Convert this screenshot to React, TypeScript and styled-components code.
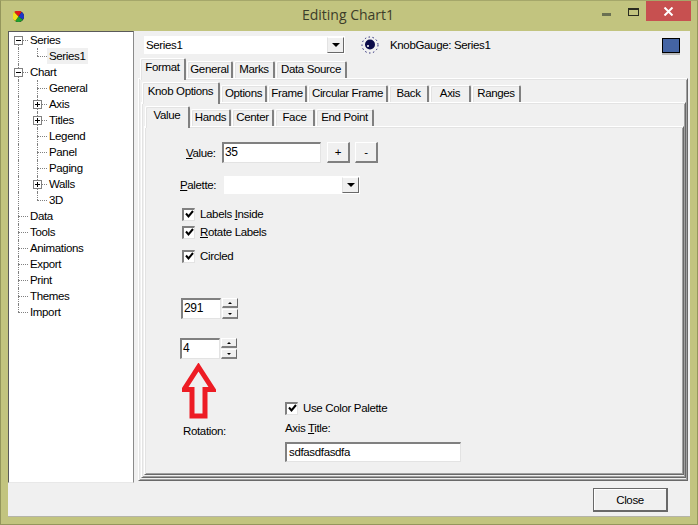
import React from "react";
import styled, { createGlobalStyle } from "styled-components";

const GlobalStyle = createGlobalStyle`
html, body {
  margin: 0;
  padding: 0;
  background: #c2c47f;
}
* {
  box-sizing: border-box;
}
`;

type GuideKind = "none" | "full" | "top" | "bottom";

type TreeItem = {
  label: string;
  first: GuideKind;
  second?: GuideKind;
  box?: "plus" | "minus";
  selected?: boolean;
};

const treeItems: TreeItem[] = [
  { label: "Series", first: "bottom", box: "minus" },
  { label: "Series1", first: "full", second: "top", selected: true },
  { label: "Chart", first: "full", box: "minus" },
  { label: "General", first: "full", second: "full" },
  { label: "Axis", first: "full", second: "full", box: "plus" },
  { label: "Titles", first: "full", second: "full", box: "plus" },
  { label: "Legend", first: "full", second: "full" },
  { label: "Panel", first: "full", second: "full" },
  { label: "Paging", first: "full", second: "full" },
  { label: "Walls", first: "full", second: "full", box: "plus" },
  { label: "3D", first: "full", second: "top" },
  { label: "Data", first: "full" },
  { label: "Tools", first: "full" },
  { label: "Animations", first: "full" },
  { label: "Export", first: "full" },
  { label: "Print", first: "full" },
  { label: "Themes", first: "full" },
  { label: "Import", first: "top" },
];

const formatTabs = [
  { label: "Format", w: 46, active: true },
  { label: "General", w: 46 },
  { label: "Marks", w: 41 },
  { label: "Data Source", w: 71 },
];

const knobTabs = [
  { label: "Knob Options", w: 78, active: true },
  { label: "Options", w: 46 },
  { label: "Frame", w: 39 },
  { label: "Circular Frame", w: 80 },
  { label: "Back", w: 40 },
  { label: "Axis", w: 41 },
  { label: "Ranges", w: 49 },
];

const valueTabs = [
  { label: "Value", w: 45, active: true },
  { label: "Hands", w: 40 },
  { label: "Center", w: 42 },
  { label: "Face", w: 40 },
  { label: "End Point", w: 58 },
];

const Tabs = ({ items, indent }: { items: { label: string; w: number; active?: boolean }[]; indent: number }) => (
  <TabStrip $indent={indent}>
    {items.map((t) => (
      <Tab key={t.label} $w={t.w} $active={t.active}>
        {t.label}
      </Tab>
    ))}
  </TabStrip>
);

const Check = ({ children }: { children: React.ReactNode }) => (
  <CheckRow>
    <CheckBox>
      <svg width="9" height="9" viewBox="0 0 9 9">
        <path d="M1 3.5 L3.5 6.5 L8 1" fill="none" stroke="#000" strokeWidth="2" />
      </svg>
    </CheckBox>
    {children}
  </CheckRow>
);

const Spinner = ({ value }: { value: string }) => (
  <SpinRow>
    <SpinInput>{value}</SpinInput>
    <SpinButtons>
      <SpinButton>
        <Caret $up />
      </SpinButton>
      <SpinButton>
        <Caret />
      </SpinButton>
    </SpinButtons>
  </SpinRow>
);

const App = () => {
  return (
    <Window>
      <GlobalStyle />
      <TitleBar>
        <AppIcon viewBox="0 0 10 10" width="11" height="11">
          <circle cx="5" cy="5" r="5" fill="#111" />
          <path d="M5 5 L1 1 A5 5 0 0 1 8 1 Z" fill="#e01818" />
          <path d="M5 5 L8 1 A5 5 0 0 1 9 8 Z" fill="#1c34c8" />
          <path d="M5 5 L9 8 A5 5 0 0 1 2 9 Z" fill="#20a030" />
          <path d="M5 5 L2 9 A5 5 0 0 1 1 1 Z" fill="#f0e020" />
        </AppIcon>
        <Caption>Editing Chart1</Caption>
        <MinButton />
        <MaxButton />
        <CloseX>
          <svg width="11" height="9" viewBox="0 0 11 9">
            <path d="M1.5 0.5 L9.5 8.5 M9.5 0.5 L1.5 8.5" stroke="#fff" strokeWidth="2" />
          </svg>
        </CloseX>
      </TitleBar>

      <Client>
        <Main>
          <Tree>
            {treeItems.map((item) => (
              <TreeRow key={item.label}>
                <Guide $kind={item.first} $tick={!item.second}>
                  {!item.second && item.box && <ExpandBox $plus={item.box === "plus"} />}
                </Guide>
                {item.second && (
                  <Guide $kind={item.second} $tick>
                    {item.box && <ExpandBox $plus={item.box === "plus"} />}
                  </Guide>
                )}
                <TreeLabel $selected={item.selected}>{item.label}</TreeLabel>
              </TreeRow>
            ))}
          </Tree>

          <Pane>
            <SeriesBar>
              <SeriesCombo>
                Series1
                <ComboButton>
                  <Caret $big />
                </ComboButton>
              </SeriesCombo>
              <KnobIcon viewBox="0 0 18 18" width="18" height="18">
                <circle cx="9" cy="9" r="8" fill="none" stroke="#1a1a6e" strokeWidth="1" strokeDasharray="1.5 2.5" />
                <circle cx="9" cy="8.5" r="5" fill="#0c0c4a" />
                <circle cx="7" cy="10" r="1" fill="#fff" />
              </KnobIcon>
              <SeriesName>KnobGauge: Series1</SeriesName>
              <ColorSwatch />
            </SeriesBar>

            <Tabs items={formatTabs} indent={2} />
            <Panel>
              <Tabs items={knobTabs} indent={1} />
              <Panel>
                <Tabs items={valueTabs} indent={1} />
                <Panel>
                  <ValueRow>
                    <ValueLabel>
                      <u>V</u>alue:
                    </ValueLabel>
                    <ValueInput>35</ValueInput>
                    <SmallButton>+</SmallButton>
                    <SmallButton>-</SmallButton>
                  </ValueRow>

                  <PaletteRow>
                    <PaletteLabel>
                      <u>P</u>alette:
                    </PaletteLabel>
                    <PaletteCombo>
                      <ComboButton>
                        <Caret $big />
                      </ComboButton>
                    </PaletteCombo>
                  </PaletteRow>

                  <Checks>
                    <Check>
                      Labels&nbsp;<u>I</u>nside
                    </Check>
                    <Check>
                      <span>
                        <u>R</u>otate Labels
                      </span>
                    </Check>
                    <CircledGap />
                    <Check>Circled</Check>
                  </Checks>

                  <FirstSpin>
                    <Spinner value="291" />
                  </FirstSpin>

                  <Lower>
                    <RotationColumn>
                      <Spinner value="4" />
                      <RedArrow viewBox="0 0 34 57" width="34" height="57">
                        <path
                          d="M16.5 4 L31 26.5 L23 26.5 L23 53 L10 53 L10 26.5 L2 26.5 Z"
                          fill="none"
                          stroke="#ed1c24"
                          strokeWidth="5"
                        />
                      </RedArrow>
                      <RotationLabel>Rotation:</RotationLabel>
                    </RotationColumn>
                    <AxisColumn>
                      <Check>Use Color Palette</Check>
                      <AxisLabel>
                        Axis <u>T</u>itle:
                      </AxisLabel>
                      <AxisInput>sdfasdfasdfa</AxisInput>
                    </AxisColumn>
                  </Lower>
                </Panel>
              </Panel>
            </Panel>
          </Pane>
        </Main>

        <Footer>
          <CloseButton>Close</CloseButton>
        </Footer>
      </Client>
    </Window>
  );
};

export default App;

const Window = styled.div`
  width: 698px;
  height: 525px;
  display: flex;
  flex-direction: column;
  background: #c2c47f;
  border: 1px solid #94965c;
  border-top-color: #a5a76a;
  font-family: "Liberation Sans", Arial, sans-serif;
  font-size: 11.5px;
  letter-spacing: -0.35px;
  color: #000;
  overflow: hidden;
`;

const TitleBar = styled.div`
  height: 30px;
  flex: none;
  display: flex;
  align-items: flex-start;
  position: relative;
`;

const AppIcon = styled.svg`
  position: absolute;
  left: 12px;
  top: 10px;
`;

const Caption = styled.div`
  flex: 1;
  text-align: center;
  padding-top: 4px;
  font-family: "Open Sans", "Noto Sans", sans-serif;
  font-size: 14px;
  letter-spacing: 0;
  line-height: 20px;
  color: #3c3d2a;
  padding-right: 2px;
`;

const MinButton = styled.div`
  position: absolute;
  left: 601px;
  top: 12px;
  width: 9px;
  height: 3px;
  background: #6a7052;
`;

const MaxButton = styled.div`
  position: absolute;
  left: 627px;
  top: 7px;
  width: 11px;
  height: 8px;
  border: 1px solid #2a2c20;
  border-top-width: 2px;
`;

const CloseX = styled.div`
  position: absolute;
  left: 645px;
  top: 0;
  width: 45px;
  height: 20px;
  background: #c75050;
  display: flex;
  align-items: center;
  justify-content: center;
`;

const Client = styled.div`
  flex: 1;
  margin: 0 7px 7px 7px;
  display: flex;
  flex-direction: column;
  background: #f0f0f0;
  border-bottom: 1px solid #b4b4a8;
`;

const Main = styled.div`
  height: 452px;
  flex: none;
  display: flex;
`;

const Tree = styled.div`
  width: 126px;
  flex: none;
  background: #fff;
  border-left: 1px solid #5a5a5a;
  border-top: 1px solid #5a5a5a;
  border-right: 1px solid #8a8a8a;
  border-bottom: 1px solid #e8e8e8;
`;

const TreeRow = styled.div`
  height: 16px;
  display: flex;
  align-items: stretch;
`;

const Guide = styled.div<{ $kind: GuideKind; $tick?: boolean }>`
  width: 19px;
  height: 16px;
  flex: none;
  position: relative;

  &::before {
    content: "";
    position: absolute;
    left: 9px;
    top: ${(p) => (p.$kind === "bottom" ? "8px" : "0")};
    height: ${(p) => (p.$kind === "full" ? "16px" : "8px")};
    border-left: ${(p) => (p.$kind === "none" ? "0" : "1px dotted #808080")};
  }

  &::after {
    content: "";
    position: absolute;
    left: 9px;
    width: 10px;
    top: 8px;
    border-top: ${(p) => (p.$tick ? "1px dotted #808080" : "0")};
  }
`;

const ExpandBox = styled.div<{ $plus?: boolean }>`
  position: absolute;
  left: 5px;
  top: 4px;
  width: 9px;
  height: 9px;
  background: #fff;
  border: 1px solid #808080;
  z-index: 1;

  &::before {
    content: "";
    position: absolute;
    left: 1px;
    top: 3px;
    width: 5px;
    height: 1px;
    background: #000;
  }

  &::after {
    content: "";
    display: ${(p) => (p.$plus ? "block" : "none")};
    position: absolute;
    left: 3px;
    top: 1px;
    width: 1px;
    height: 5px;
    background: #000;
  }
`;

const TreeLabel = styled.div<{ $selected?: boolean }>`
  margin-left: ${(p) => (p.$selected ? "0" : "2px")};
  padding: 0 ${(p) => (p.$selected ? "2px" : "0")};
  line-height: 16px;
  white-space: nowrap;
  background: ${(p) => (p.$selected ? "#f0f0f0" : "transparent")};
`;

const Pane = styled.div`
  flex: 1;
  min-width: 0;
  display: flex;
  flex-direction: column;
  padding: 5px 2px 2px 4px;
`;

const SeriesBar = styled.div`
  height: 18px;
  flex: none;
  margin-bottom: 4px;
  display: flex;
  align-items: center;
`;

const SeriesCombo = styled.div`
  width: 201px;
  height: 18px;
  margin-left: 6px;
  padding-left: 2px;
  background: #fff;
  line-height: 18px;
  display: flex;
  justify-content: space-between;
`;

const ComboButton = styled.div`
  width: 17px;
  height: 16px;
  margin: 1px 1px 1px auto;
  background: #f0f0f0;
  border-left: 1px solid #e3e3e3;
  border-top: 1px solid #fff;
  border-right: 1px solid #696969;
  border-bottom: 1px solid #696969;
  display: flex;
  align-items: center;
  justify-content: center;
`;

const Caret = styled.div<{ $up?: boolean; $big?: boolean }>`
  width: 0;
  height: 0;
  border-left: ${(p) => (p.$big ? "4px" : "2px")} solid transparent;
  border-right: ${(p) => (p.$big ? "4px" : "2px")} solid transparent;
  border-top: ${(p) => (p.$up ? "0" : p.$big ? "4px solid #000" : "2px solid #000")};
  border-bottom: ${(p) => (p.$up ? "2px solid #000" : "0")};
`;

const KnobIcon = styled.svg`
  margin-left: 16px;
  flex: none;
`;

const SeriesName = styled.div`
  margin-left: 11px;
`;

const ColorSwatch = styled.div`
  width: 18px;
  height: 15px;
  margin: 0 8px 0 auto;
  background: #4464a4;
  border: 1px solid #000;
  box-shadow: 0 2px 0 #b8b8b8;
`;

const TabStrip = styled.div<{ $indent: number }>`
  height: 20px;
  flex: none;
  margin-left: ${(p) => p.$indent}px;
  display: flex;
  gap: 1px;
  align-items: flex-end;
  position: relative;
  z-index: 1;
`;

const Tab = styled.div<{ $w: number; $active?: boolean }>`
  width: ${(p) => p.$w}px;
  height: ${(p) => (p.$active ? "22px" : "17px")};
  margin-bottom: ${(p) => (p.$active ? "-2px" : "0")};
  flex: none;
  background: #f0f0f0;
  border-top: 1px solid #fff;
  border-left: 1px solid #fff;
  border-right: 2px solid #808080;
  border-top-left-radius: 2px;
  border-top-right-radius: 2px;
  text-align: center;
  line-height: ${(p) => (p.$active ? "17px" : "14px")};
  white-space: nowrap;
  box-shadow: inset 1px 1px 0 #e3e3e3;
`;

const Panel = styled.div`
  flex: 1;
  min-height: 0;
  display: flex;
  flex-direction: column;
  padding: 3px 1px 2px 2px;
  border-top: 1px solid #fff;
  border-left: 1px solid #fff;
  border-right: 1px solid #696969;
  border-bottom: 1px solid #696969;
  box-shadow: inset 1px 1px 0 #e3e3e3, inset -1px -1px 0 #a0a0a0;
`;

const ValueRow = styled.div`
  margin: 12px 0 0 39px;
  display: flex;
  align-items: center;
`;

const ValueLabel = styled.div`
  width: 36px;
  flex: none;
`;

const Sunken = styled.div`
  background: #fff;
  border-top: 2px solid #808080;
  border-left: 2px solid #808080;
  border-right: 1px solid #e3e3e3;
  border-bottom: 1px solid #e3e3e3;
  padding-left: 1px;
  white-space: nowrap;
`;

const ValueInput = styled(Sunken)`
  width: 99px;
  height: 21px;
  margin-right: 1px;
  line-height: 17px;
  font-size: 12px;
`;

const SmallButton = styled.div`
  width: 23px;
  height: 21px;
  margin-left: 5px;
  background: #f0f0f0;
  border-top: 1px solid #fff;
  border-left: 1px solid #fff;
  border-right: 2px solid #808080;
  border-bottom: 2px solid #808080;
  text-align: center;
  line-height: 18px;
`;

const PaletteRow = styled.div`
  margin: 13px 0 0 33px;
  display: flex;
  align-items: center;
`;

const PaletteLabel = styled.div`
  width: 44px;
  flex: none;
`;

const PaletteCombo = styled.div`
  width: 136px;
  height: 18px;
  background: #fff;
  display: flex;
`;

const Checks = styled.div`
  margin: 11px 0 0 35px;
`;

const CircledGap = styled.div`
  height: 6px;
`;

const CheckRow = styled.div`
  height: 18px;
  display: flex;
  align-items: center;
  white-space: nowrap;
`;

const CheckBox = styled.div`
  width: 13px;
  height: 13px;
  flex: none;
  margin-right: 5px;
  background: #fff;
  border-top: 2px solid #808080;
  border-left: 2px solid #808080;
  border-right: 1px solid #e3e3e3;
  border-bottom: 1px solid #e3e3e3;
  display: flex;
  align-items: center;
  justify-content: center;
`;

const FirstSpin = styled.div`
  margin: 33px 0 0 34px;
`;

const SpinRow = styled.div`
  display: flex;
  gap: 1px;
`;

const SpinInput = styled(Sunken)`
  width: 40px;
  height: 21px;
  line-height: 17px;
  font-size: 12px;
`;

const SpinButtons = styled.div`
  width: 16px;
  display: flex;
  flex-direction: column;
  gap: 1px;
`;

const SpinButton = styled.div`
  height: 10px;
  background: #f0f0f0;
  border-top: 1px solid #fff;
  border-left: 1px solid #fff;
  border-right: 1px solid #696969;
  border-bottom: 2px solid #808080;
  display: flex;
  align-items: center;
  justify-content: center;
`;

const Lower = styled.div`
  margin: 19px 0 0 33px;
  display: flex;
`;

const RotationColumn = styled.div`
  width: 105px;
  flex: none;
`;

const RedArrow = styled.svg`
  display: block;
  margin: 4px 0 0 2px;
`;

const RotationLabel = styled.div`
  margin: 3px 0 0 3px;
  line-height: 16px;
`;

const AxisColumn = styled.div`
  flex: 1;
  padding-top: 61px;
`;

const AxisLabel = styled.div`
  margin-top: 3px;
  line-height: 16px;
`;

const AxisInput = styled(Sunken)`
  width: 176px;
  height: 20px;
  margin-top: 6px;
  padding-left: 2px;
  line-height: 16px;
`;

const Footer = styled.div`
  flex: 1;
  display: flex;
  justify-content: flex-end;
  padding: 5px 22px 0 0;
`;

const CloseButton = styled.div`
  width: 75px;
  height: 24px;
  background: #f0f0f0;
  border: 1px solid #696969;
  border-right-width: 2px;
  border-bottom-width: 2px;
  box-shadow: inset 1px 1px 0 #fff;
  text-align: center;
  line-height: 22px;
`;
